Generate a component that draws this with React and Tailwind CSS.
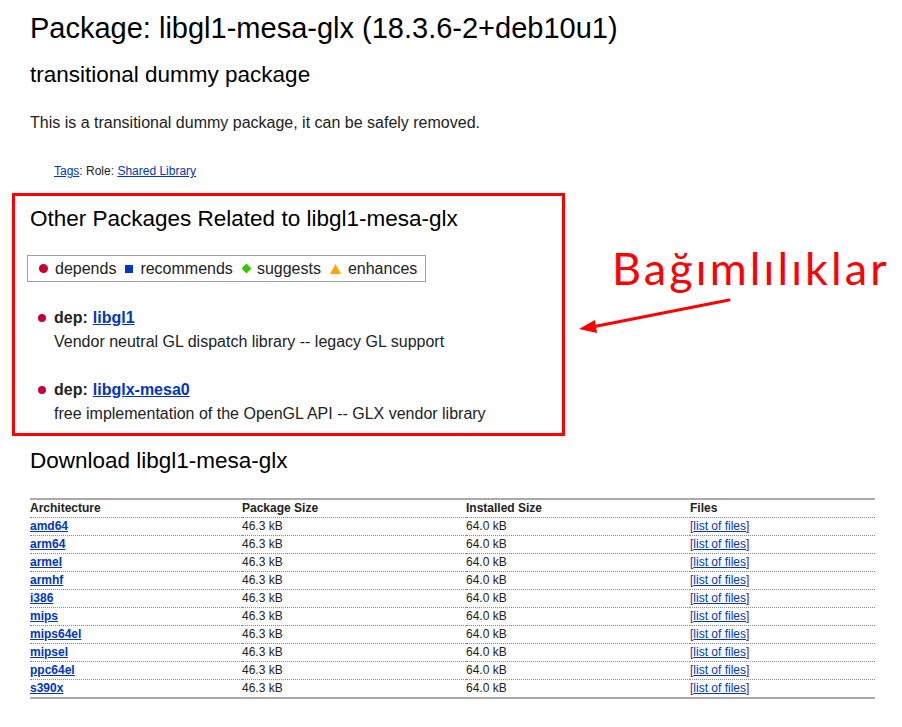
import React from 'react';

const arches = ['amd64', 'arm64', 'armel', 'armhf', 'i386', 'mips', 'mips64el', 'mipsel', 'ppc64el', 's390x'];

const deps = [
  { name: 'libgl1', desc: 'Vendor neutral GL dispatch library -- legacy GL support' },
  { name: 'libglx-mesa0', desc: 'free implementation of the OpenGL API -- GLX vendor library' },
];

function Legend() {
  return (
    <div className="-ml-[3px] inline-flex items-center h-[27px] border border-[#a0a0a0] pl-[11px] pr-[8px] text-[16px] text-[#222] gap-[7px]">
      <span className="w-[9px] h-[9px] rounded-full bg-[#c70036]" />
      <span>depends</span>
      <span className="ml-[2px] w-[8px] h-[8px] bg-[#0035c7]" />
      <span>recommends</span>
      <span className="ml-[3px] w-[7px] h-[7px] bg-[#36c700] rotate-45" />
      <span>suggests</span>
      <svg className="ml-[2px]" width="11" height="10" viewBox="0 0 11 10"><polygon points="5.5,0 11,10 0,10" fill="#ffa500" /></svg>
      <span>enhances</span>
    </div>
  );
}

export default function App() {
  return (
    <div className="relative w-[902px] h-[727px] bg-white overflow-hidden font-['Liberation_Sans',Arial,sans-serif] text-[#222]">
      <div className="pl-[30px] pt-[10px]">
        <h1 className="text-[29px] leading-[36px] text-black">Package: libgl1-mesa-glx (18.3.6-2+deb10u1)</h1>
        <h2 className="mt-[16px] text-[22.5px] leading-[26px] text-black">transitional dummy package</h2>
        <p className="mt-[25px] text-[16px] leading-[20px]">This is a transitional dummy package, it can be safely removed.</p>
        <p className="mt-[30px] ml-[24px] text-[12px] leading-[16px]">
          <a className="text-[#0035c7] underline">Tags</a>: Role: <a className="text-[#0035c7] underline">Shared Library</a>
        </p>
      </div>

      <div className="mt-[14px] ml-[12px] w-[553px] h-[243px] border-[3px] border-[#ff0000] pl-[15px] pt-[10px]">
        <h2 className="text-[22.5px] leading-[26px] text-black">Other Packages Related to libgl1-mesa-glx</h2>
        <div className="mt-[23px]">
          <Legend />
        </div>
        <ul className="mt-[24px]">
          {deps.map((d) => (
            <li key={d.name} className="mb-[24px]">
              <div className="flex items-center text-[16px] leading-[24px]">
                <span className="ml-[8px] w-[8px] h-[8px] rounded-full bg-[#c70036]" />
                <span className="ml-[8px] font-bold">dep:</span>
                <a className="ml-[5px] font-bold text-[#0035c7] underline">{d.name}</a>
              </div>
              <div className="ml-[24px] text-[16px] leading-[24px]">{d.desc}</div>
            </li>
          ))}
        </ul>
      </div>

      <div className="pl-[30px] pr-[27px] mt-[12px]">
        <h2 className="text-[22.5px] leading-[26px] text-black">Download libgl1-mesa-glx</h2>
        <table className="mt-[24px] w-full border-t-2 border-b-2 border-[#aaa] text-[12px] leading-[17px] border-collapse">
          <thead>
            <tr className="border-b border-dotted border-[#888]">
              <th className="w-[212px] text-left font-bold">Architecture</th>
              <th className="w-[224px] text-left font-bold">Package Size</th>
              <th className="w-[224px] text-left font-bold">Installed Size</th>
              <th className="text-left font-bold">Files</th>
            </tr>
          </thead>
          <tbody>
            {arches.map((a, i) => (
              <tr key={a} className={i < arches.length - 1 ? 'border-b border-dotted border-[#888]' : ''}>
                <td><a className="font-bold text-[#0035c7] underline">{a}</a></td>
                <td>46.3 kB</td>
                <td>64.0 kB</td>
                <td className="text-[#4b2a66]">[<a className="text-[#0035c7] underline">list of files</a>]</td>
              </tr>
            ))}
          </tbody>
        </table>
      </div>

      <div className="absolute left-[612px] top-[238px] text-[45px] leading-[60px] tracking-[3.1px] text-[#ff0000] font-['Lato',sans-serif]">Bağımlılıklar</div>
      <svg className="absolute left-0 top-0" width="902" height="727" viewBox="0 0 902 727">
        <line x1="729" y1="300" x2="592" y2="327" stroke="#ff0000" strokeWidth="3" strokeLinecap="round" />
        <polygon points="579,329 595,320 597,333" fill="#ff0000" />
      </svg>
    </div>
  );
}
